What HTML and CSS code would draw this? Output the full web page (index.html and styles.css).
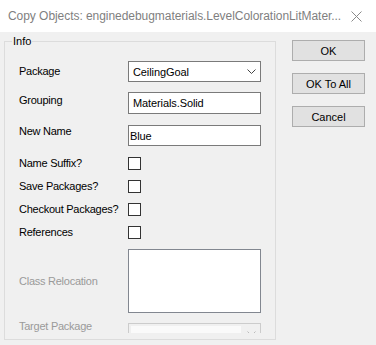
FILE: index.html
```html
<!DOCTYPE html>
<html>
<head>
<meta charset="utf-8">
<link rel="stylesheet" href="styles.css">
</head>
<body>
<div class="window">
  <div class="titlebar">
    <span class="title">Copy Objects: enginedebugmaterials.LevelColorationLitMater...</span>
    <svg class="close" width="11" height="11" viewBox="0 0 11 11"><path d="M0.5 0.5 L10.5 10.5 M10.5 0.5 L0.5 10.5" stroke="#8a8a8a" stroke-width="1" fill="none"/></svg>
  </div>
  <div class="content">
    <div class="group">
      <span class="legend">Info</span>
      <div class="row r-package">
        <span class="label lp1">Package</span>
        <div class="combo"><span class="ctext">CeilingGoal</span>
          <svg class="chev" width="9" height="5" viewBox="0 0 9 5"><path d="M0.5 0.5 L4.5 4.5 L8.5 0.5" stroke="#444" stroke-width="1" fill="none"/></svg>
        </div>
      </div>
      <div class="row r-grouping">
        <span class="label lp2">Grouping</span>
        <div class="textbox tall"><span class="ttext">Materials.Solid</span></div>
      </div>
      <div class="row r-name">
        <span class="label lp3">New Name</span>
        <div class="textbox"><span class="ttext tight">Blue</span></div>
      </div>
      <div class="row r-check first">
        <span class="label">Name Suffix?</span>
        <span class="check"></span>
      </div>
      <div class="row r-check">
        <span class="label">Save Packages?</span>
        <span class="check"></span>
      </div>
      <div class="row r-check">
        <span class="label">Checkout Packages?</span>
        <span class="check"></span>
      </div>
      <div class="row r-check">
        <span class="label">References</span>
        <span class="check"></span>
      </div>
      <div class="row r-reloc">
        <span class="label disabled">Class Relocation</span>
        <div class="listbox"></div>
      </div>
      <div class="row r-target">
        <span class="label disabled lp-t">Target Package</span>
        <div class="clip">
          <div class="combo-dis"><span class="inner"></span>
            <svg class="chev-dis" width="9" height="5" viewBox="0 0 9 5"><path d="M0.5 0.5 L4.5 4.5 L8.5 0.5" stroke="#bbb" stroke-width="1" fill="none"/></svg>
          </div>
        </div>
      </div>
    </div>
    <div class="buttons">
      <button class="btn">OK</button>
      <button class="btn">OK To All</button>
      <button class="btn">Cancel</button>
    </div>
  </div>
</div>
</body>
</html>
```
FILE: styles.css
```css
html, body {
  margin: 0;
  padding: 0;
}
body {
  width: 376px;
  height: 345px;
  overflow: hidden;
  background: #f0f0f0;
  font-family: "Liberation Sans", Arial, sans-serif;
  font-size: 11px;
  color: #000;
}
.window {
  width: 376px;
  height: 345px;
  display: flex;
  flex-direction: column;
}
.titlebar {
  height: 32px;
  flex: none;
  background: #fff;
  display: flex;
  align-items: center;
  padding-left: 8px;
  box-sizing: border-box;
}
.title {
  font-family: "Liberation Sans", Arial, sans-serif;
  font-size: 12px;
  letter-spacing: -0.05px;
  color: #7f7f7f;
  white-space: nowrap;
  flex: 1;
  padding-bottom: 1px;
}
.close {
  margin-right: 14px;
  margin-left: 6px;
}
.content {
  display: flex;
  padding: 9px 0 0 4px;
}
.group {
  position: relative;
  width: 272px;
  height: 299px;
  box-sizing: border-box;
  border: 1px solid #dcdcdc;
  padding: 19px 0 0 14px;
}
.legend {
  position: absolute;
  top: -8px;
  left: 7px;
  background: #f0f0f0;
  padding: 0 1px;
  line-height: 14px;
  color: #000;
}
.row {
  display: flex;
  align-items: flex-start;
}
.label {
  width: 109px;
  flex: none;
  line-height: 13px;
  white-space: nowrap;
  letter-spacing: -0.25px;
}
.lp1 { padding-top: 4px; }
.lp2 { padding-top: 2px; }
.lp3 { padding-top: 0; }
.r-grouping { margin-top: 10px; }
.r-name { margin-top: 11px; }
.combo, .textbox {
  width: 133px;
  height: 21px;
  box-sizing: border-box;
  border: 1px solid #7a7a7a;
  background: #fff;
  display: flex;
  align-items: center;
}
.textbox.tall { height: 22px; }
.ctext, .ttext {
  padding-left: 4px;
  flex: 1;
  white-space: nowrap;
  letter-spacing: -0.1px;
}
.ttext.tight { padding-left: 1px; }
.chev { margin-right: 4px; }
.r-check {
  align-items: center;
  margin-top: 10px;
  height: 13px;
}
.r-check.first { margin-top: 11px; }
.check {
  width: 13px;
  height: 13px;
  box-sizing: border-box;
  border: 1px solid #333;
  background: #fff;
}
.disabled { color: #9a9a9a; }
.r-reloc {
  margin-top: 10px;
  align-items: center;
}
.listbox {
  width: 133px;
  height: 64px;
  box-sizing: border-box;
  border: 1px solid #828790;
  background: #fff;
}
.r-target { margin-top: 10px; }
.lp-t { padding-top: 0; margin-top: -3px; }
.clip {
  height: 10px;
  overflow: hidden;
}
.combo-dis {
  position: relative;
  width: 133px;
  height: 21px;
  box-sizing: border-box;
  border: 1px solid #cccccc;
  background: #f0f0f0;
  display: flex;
  align-items: center;
}
.combo-dis .inner {
  margin: 0 0 0 2px;
  align-self: flex-start;
  margin-top: 2px;
  width: 110px;
  height: 15px;
  background: #fafafa;
}
.chev-dis { margin-left: auto; margin-right: 4px; }
.buttons {
  display: flex;
  flex-direction: column;
  gap: 12px;
  margin-left: 16px;
  margin-top: -1px;
}
.btn {
  width: 73px;
  height: 21px;
  box-sizing: border-box;
  border: 1px solid #adadad;
  background: #e1e1e1;
  font-family: "Liberation Sans", Arial, sans-serif;
  font-size: 11px;
  color: #000;
  padding: 0;
  margin: 0;
}
```
